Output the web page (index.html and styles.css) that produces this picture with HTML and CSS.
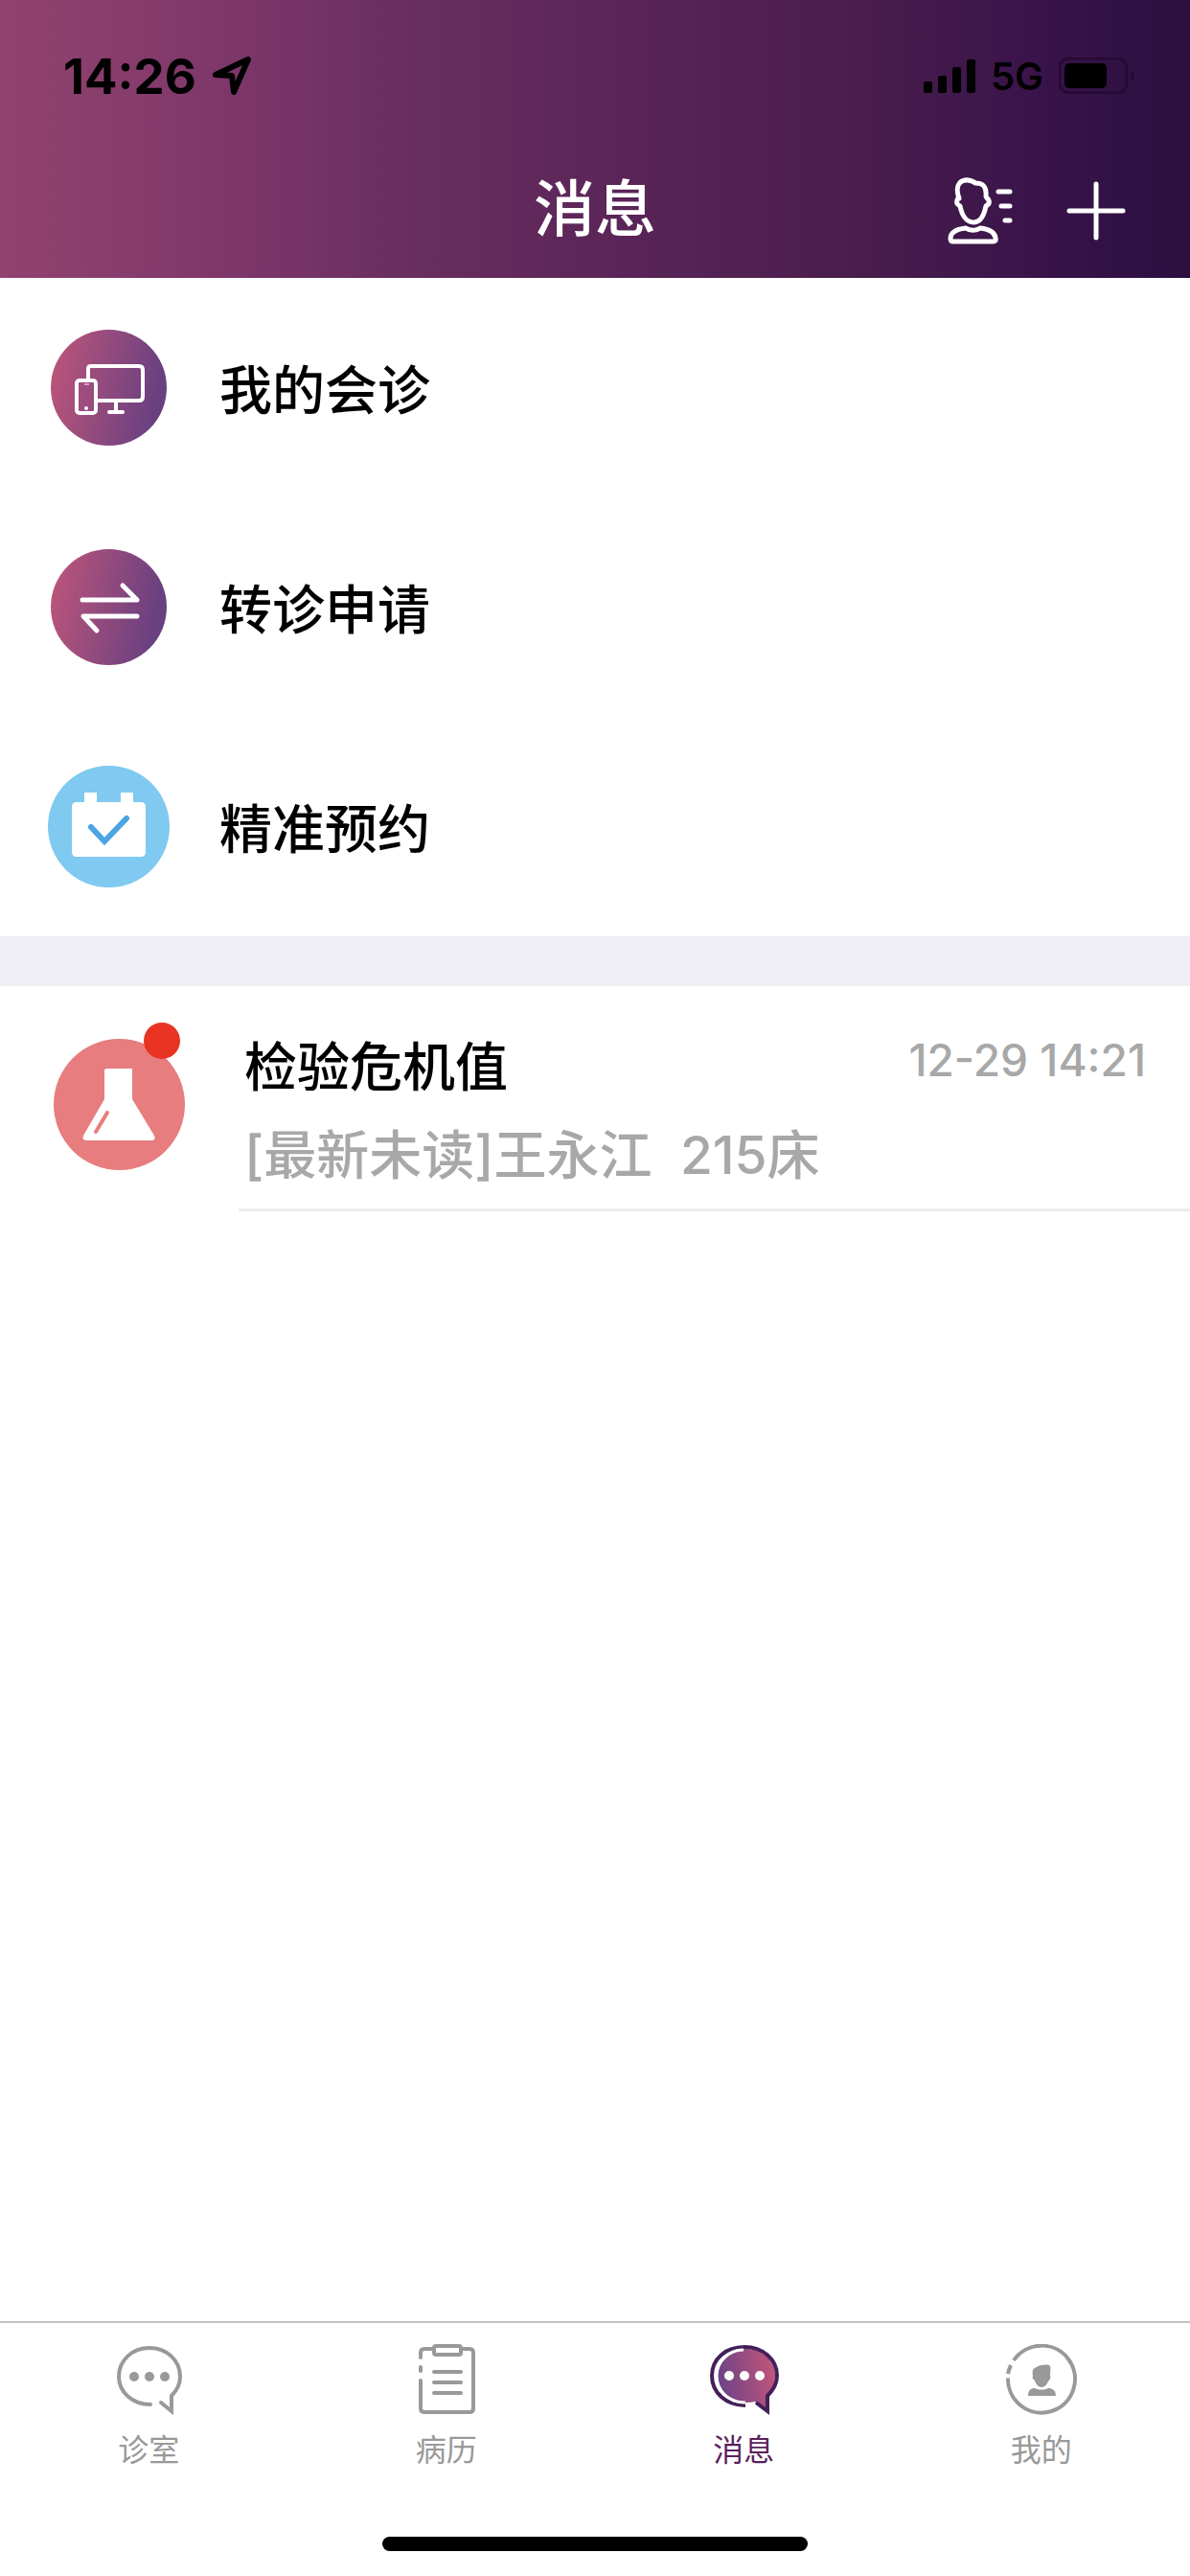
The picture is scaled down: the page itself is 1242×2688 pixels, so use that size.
FILE: index.html
```html
<!DOCTYPE html>
<html lang="zh-CN">
<head>
  <meta charset="UTF-8">
  <meta name="viewport" content="width=device-width, initial-scale=1">
  <title>消息</title>
  <link rel="stylesheet" href="styles.css">
</head>
<body>
  <header class="header">
    <div class="status-bar">
      <div class="status-left">
        <span class="status-time">14:26</span>
        <svg class="icon-location" width="42" height="42" viewBox="0 0 42 42">
          <path d="M4 20L38 4L23 38L21 21Z" fill="none" stroke="#000" stroke-width="6" stroke-linejoin="round"/>
        </svg>
      </div>
      <div class="status-right">
        <svg width="54" height="37" viewBox="0 0 54 37">
          <rect x="0" y="24" width="9" height="12" rx="2"/>
          <rect x="15" y="18" width="9" height="18" rx="2"/>
          <rect x="30" y="9" width="9" height="27" rx="2"/>
          <rect x="45" y="1" width="9" height="35" rx="2"/>
        </svg>
        <span class="status-network">5G</span>
        <svg width="80" height="38" viewBox="0 0 80 38">
          <rect x="1" y="1" width="70" height="36" rx="10" fill="none" stroke="#260a33" stroke-width="3"/>
          <rect x="6" y="6" width="44" height="26" rx="5"/>
          <path d="M75 13q4 2 4 6t-4 6z" fill="#260a33"/>
        </svg>
      </div>
    </div>
    <div class="nav-bar">
      <h1>消息</h1>
      <div class="nav-actions">
        <button type="button" aria-label="联系人">
          <svg width="68" height="70" viewBox="0 0 68 70" fill="none" stroke="#fff" stroke-width="5" stroke-linecap="round" stroke-linejoin="round">
            <path d="M12 22C9 14 10 7 15 4C20 2 25 3 29 6C37 6 41 10 40 20C40 21 42 22 43 24C44 27 42 29 40 30C38 40 34 47 27 47C20 47 15 40 13 30C10 28 9 27 10 24C10 22 12 22 12 22Z"/>
            <path d="M19 53C10 54 3 57 3 64Q3 67 6 67H48Q51 67 50 63C49 57 43 54 34 53C30 56 23 56 19 53Z"/>
            <path d="M53 15H65M56 30H65M60 45H65"/>
          </svg>
        </button>
        <button type="button" aria-label="添加">
          <svg width="62" height="62" viewBox="0 0 62 62" fill="none" stroke="#fff" stroke-width="5" stroke-linecap="round">
            <path d="M31 3V59M3 31H59"/>
          </svg>
        </button>
      </div>
    </div>
  </header>

  <main class="content">
    <nav class="menu">
      <a href="#" class="menu-item">
        <span class="menu-icon">
          <svg width="121" height="121" viewBox="0 0 121 121">
            <defs>
              <linearGradient id="purple" x1="0" y1="0" x2="1" y2="0.2">
                <stop offset="0" stop-color="#c0567a"/>
                <stop offset="1" stop-color="#694080"/>
              </linearGradient>
            </defs>
            <circle cx="60.500" cy="60.500" r="60.500" fill="url(#purple)"/>
            <g fill="none" stroke="#fff" stroke-width="4">
              <path d="M39 52V41Q39 38 42 38H92Q96 38 96 42V70Q96 74 92 74H48"/>
              <path d="M68 74V85M61 86H75" stroke-linecap="round"/>
              <rect x="27" y="53" width="20" height="34" rx="3"/>
              <path d="M35 57H40" stroke-width="1"/>
            </g>
            <circle cx="37" cy="82" r="2" fill="#fff"/>
          </svg>
        </span>
        <span class="menu-label">我的会诊</span>
      </a>
      <a href="#" class="menu-item">
        <span class="menu-icon">
          <svg width="121" height="121" viewBox="0 0 121 121">
            <circle cx="60.500" cy="60.500" r="60.500" fill="url(#purple)"/>
            <path d="M33 53H90L75 38M90 70H34L48 85" fill="none" stroke="#fff" stroke-width="5" stroke-linecap="round" stroke-linejoin="round"/>
          </svg>
        </span>
        <span class="menu-label">转诊申请</span>
      </a>
      <a href="#" class="menu-item">
        <span class="menu-icon">
          <svg width="127" height="127" viewBox="0 0 127 127">
            <circle cx="63.500" cy="63.500" r="63.500" fill="#80c9f0"/>
            <path d="M38 28H51V38H76V28H89V38H97Q102 38 102 43V90Q102 95 97 95H30Q25 95 25 90V43Q25 38 30 38H38Z" fill="#fff"/>
            <path d="M45 64L59 79L82 55" fill="none" stroke="#4ca5e3" stroke-width="6" stroke-linecap="round"/>
          </svg>
        </span>
        <span class="menu-label">精准预约</span>
      </a>
    </nav>

    <div class="separator"></div>

    <a href="#" class="message">
      <span class="message-icon">
        <svg width="137" height="137" viewBox="0 0 137 137">
          <circle cx="68.500" cy="68.500" r="68.500" fill="#e77d7e"/>
          <path d="M56 31H81Q82 31 82 32V63L105 101Q107 106 102 106H35Q29 106 31 101L53 63V33Q53 31 56 31Z" fill="#fff"/>
          <path d="M56 77L44 97" stroke="#e77d7e" stroke-width="4" stroke-linecap="round"/>
        </svg>
        <span class="badge"></span>
      </span>
      <span class="message-body">
        <span class="message-top">
          <span class="message-title">检验危机值</span>
          <time class="message-time">12-29 14:21</time>
        </span>
        <span class="message-text">[最新未读]王永江&nbsp; 215床</span>
      </span>
    </a>
  </main>

  <footer class="tab-bar">
    <nav class="tabs">
      <a href="#" class="tab">
        <svg width="76" height="76" viewBox="-1 0 76 76" fill="none" stroke="#999" stroke-width="4" stroke-linecap="round">
          <path d="M39 63C20 63 6 50 6 34C6 17 20 4 38 4C56 4 70 17 70 34C70 43 66 49 61 54V70L50 61"/>
          <g fill="#999" stroke="none">
            <circle cx="22" cy="34" r="5"/>
            <circle cx="38" cy="34" r="5"/>
            <circle cx="54" cy="34" r="5"/>
          </g>
        </svg>
        <span>诊室</span>
      </a>
      <a href="#" class="tab">
        <svg width="76" height="76" viewBox="0 0 76 76" fill="none" stroke="#999" stroke-width="4" stroke-linecap="round">
          <path d="M11 14V9Q11 5 15 5H23M54 5H62Q66 5 66 9V67Q66 71 62 71H15Q11 71 11 67V38"/>
          <path d="M11 24V28"/>
          <rect x="25" y="2" width="28" height="9" rx="2"/>
          <path d="M25 29H53M25 40H53M25 51H53"/>
        </svg>
        <span>病历</span>
      </a>
      <a href="#" class="tab active">
        <svg width="76" height="76" viewBox="-1 0 76 76">
          <defs>
            <linearGradient id="bubble" x1="0" y1="0.4" x2="1" y2="0.2">
              <stop offset="0" stop-color="#6e4386"/>
              <stop offset="1" stop-color="#c4567a"/>
            </linearGradient>
          </defs>
          <path d="M40 5C57 5 70 18 70 33C70 43 66 48 61 53V69L49 60Q45 61 40 61C22 61 10 49 10 33C10 18 22 5 40 5Z" fill="url(#bubble)"/>
          <path d="M39 64C19 64 4 51 4 33C4 15 19 3 38 3C57 3 72 16 72 33C72 43 67 49 62 54V70L50 61" fill="none" stroke="#44205a" stroke-width="4"/>
          <path d="M39 61C22 61 9 49 9 33C9 18 22 6 37 6" fill="none" stroke="#fff" stroke-width="3"/>
          <g fill="#fff">
            <circle cx="22" cy="33" r="5"/>
            <circle cx="38" cy="33" r="5"/>
            <circle cx="54" cy="33" r="5"/>
          </g>
        </svg>
        <span>消息</span>
      </a>
      <a href="#" class="tab">
        <svg width="76" height="76" viewBox="0 0 76 76" fill="none" stroke="#999" stroke-width="4">
          <path d="M9 17A35 35 0 1 1 3 35.500"/>
          <path d="M3 31Q4 26 6 22"/>
          <path d="M29 33C28 28 29 25 33 24C38 21 46 21 47 23C48 25 47 29 47 33C48 36 46 38 45 39C43 43 41 45 38 45C35 45 32 42 31 38C29 37 28 35 29 33ZM24 54C24 48 27 46 31 46C35 48 41 48 45 46C49 46 53 48 53 54Z" fill="#999" stroke="none"/>
        </svg>
        <span>我的</span>
      </a>
    </nav>
    <div class="home-indicator"></div>
  </footer>
</body>
</html>
```
FILE: styles.css
```css
* {
  box-sizing: border-box;
}

body {
  margin: 0;
  min-height: 100vh;
  display: flex;
  flex-direction: column;
  background-color: #fff;
  color: #000;
  font-family: Inter, "Noto Sans CJK SC", sans-serif;
}

a {
  color: inherit;
  text-decoration: none;
}

svg {
  display: block;
}

/* Header */
.header {
  height: 290px;
  background: linear-gradient(to right, #91436f 0%, #7d366a 20%, #6a2e60 34%, #5a2558 52%, #481d4c 73%, #38134a 88%, #2b0f3f 100%);
}

.status-bar {
  height: 158px;
  padding: 0 57px 0 66px;
  display: flex;
  align-items: center;
  justify-content: space-between;
}

.status-left,
.status-right {
  display: flex;
  align-items: center;
  gap: 16px;
}

.status-time {
  font-size: 51px;
  font-weight: 700;
}

.status-network {
  font-size: 40px;
  font-weight: 600;
}

.nav-bar {
  height: 124px;
  padding: 0 67px;
  display: grid;
  grid-template-columns: 1fr auto 1fr;
  align-items: center;
}

.nav-bar h1 {
  grid-column: 2;
  margin: 0;
  padding-bottom: 4px;
  color: #fff;
  font-size: 64px;
  line-height: 80px;
  font-weight: 500;
}

.nav-actions {
  display: flex;
  align-items: center;
  justify-content: flex-end;
  gap: 56px;
}

.nav-actions button {
  padding: 0;
  border: none;
  background: none;
  cursor: pointer;
}

/* Menu */
.content {
  flex: 1;
}

.menu-item {
  height: 229px;
  padding-left: 50px;
  display: flex;
  align-items: center;
  gap: 52px;
}

.menu-icon {
  width: 127px;
  display: flex;
  justify-content: center;
}

.menu-label,
.message-title {
  font-size: 55px;
  line-height: 80px;
  font-weight: 500;
}

.menu-label {
  padding-top: 5px;
}

.separator {
  height: 52px;
  background-color: #f0eff5;
}

/* Messages */
.message {
  display: flex;
  gap: 56px;
  padding-left: 56px;
}

.message-icon {
  position: relative;
  flex: none;
  align-self: flex-start;
  margin-top: 55px;
}

.badge {
  position: absolute;
  top: -17px;
  right: 5px;
  width: 38px;
  height: 38px;
  border-radius: 50%;
  background-color: #e93323;
}

.message-body {
  flex: 1;
  height: 235px;
  padding: 44px 46px 0 6px;
  border-bottom: 3px solid #ececec;
}

.message-top {
  display: flex;
  justify-content: space-between;
}

.message-time {
  color: #a8a8a8;
  font-size: 46px;
  line-height: 66px;
  font-weight: 500;
}

.message-text {
  display: block;
  margin-top: 12px;
  color: #a8a8a8;
  font-size: 55px;
  line-height: 80px;
  font-weight: 500;
}

/* Tab bar */
.tab-bar {
  height: 266px;
  padding-bottom: 26px;
  display: flex;
  flex-direction: column;
  justify-content: space-between;
  border-top: 2px solid #c4c4c4;
}

.tabs {
  display: flex;
}

.tab {
  flex: 1;
  padding-top: 22px;
  display: flex;
  flex-direction: column;
  align-items: center;
  gap: 12px;
  color: #999;
  font-size: 32px;
  line-height: 46px;
}

.tab.active {
  color: #5a1f5c;
}

.home-indicator {
  width: 444px;
  height: 15px;
  margin: 0 auto;
  border-radius: 8px;
  background-color: #000;
}
```
